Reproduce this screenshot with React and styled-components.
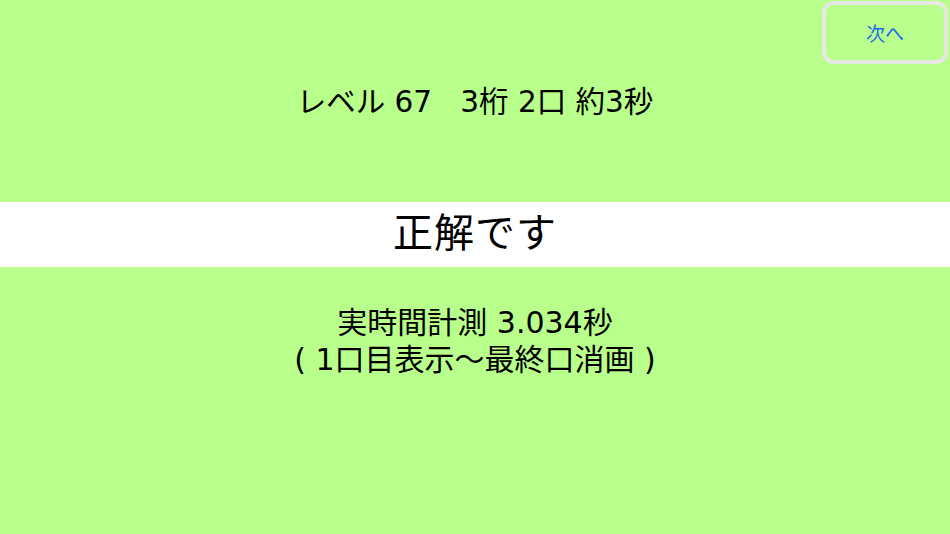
import React from 'react';
import styled, { createGlobalStyle } from 'styled-components';

const GlobalStyle = createGlobalStyle`
  html, body {
    margin: 0;
    padding: 0;
    background: #b9ff8b;
  }
  body {
    font-family: 'DejaVu Sans', 'Noto Sans CJK JP', sans-serif;
    color: #000;
  }
`;

const Screen = styled.div`
  position: relative;
  width: 950px;
  height: 534px;
  background: #b9ff8b;
  display: flex;
  flex-direction: column;
  overflow: hidden;
`;

const Header = styled.div`
  height: 202px;
  display: flex;
  align-items: center;
  justify-content: center;
  padding-top: 4px;
  box-sizing: border-box;
`;

const Title = styled.div`
  font-size: 29.5px;
  white-space: pre;
  line-height: 1;
`;

const NextButton = styled.button`
  position: absolute;
  top: 1px;
  right: 2px;
  width: 126px;
  height: 63px;
  border: 4px solid #e6e9e3;
  border-radius: 12px;
  background: transparent;
  color: #1f6bf0;
  font-family: 'Noto Sans CJK JP', sans-serif;
  font-size: 19px;
  cursor: pointer;
  padding: 0;
`;

const Banner = styled.div`
  height: 65px;
  background: #fff;
  display: flex;
  align-items: center;
  justify-content: center;
`;

const BannerText = styled.div`
  font-size: 40px;
  line-height: 1;
  letter-spacing: 1px;
  margin-top: -3px;
`;

const Result = styled.div`
  padding-top: 37px;
  display: flex;
  flex-direction: column;
  align-items: center;
`;

const ResultLine = styled.div`
  font-size: 30px;
  line-height: 37px;
  white-space: pre;
`;

export default function App() {
  return (
    <>
      <GlobalStyle />
      <Screen>
        <Header>
          <Title>{'レベル 67   3桁 2口 約3秒'}</Title>
        </Header>
        <NextButton>次へ</NextButton>
        <Banner>
          <BannerText>正解です</BannerText>
        </Banner>
        <Result>
          <ResultLine>{'実時間計測 3.034秒'}</ResultLine>
          <ResultLine>{'( 1口目表示～最終口消画 )'}</ResultLine>
        </Result>
      </Screen>
    </>
  );
}
